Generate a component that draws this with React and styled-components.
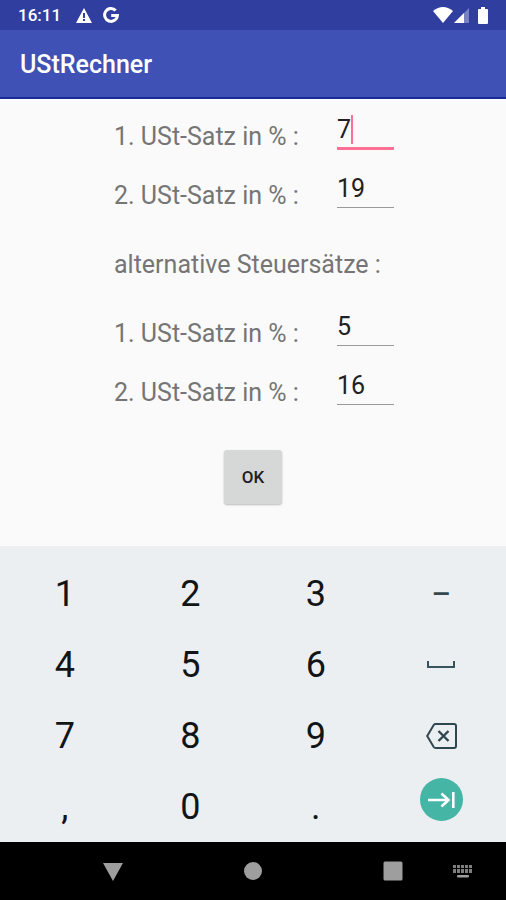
import { useState } from 'react';
import styled, { createGlobalStyle } from 'styled-components';

const GlobalStyle = createGlobalStyle`
  * {
    box-sizing: border-box;
  }

  body {
    margin: 0;
    background: #fafafa;
    font-family: Roboto, 'Liberation Sans', sans-serif;
  }

  button {
    border: none;
    padding: 0;
    background: none;
    font: inherit;
    color: inherit;
    cursor: pointer;
  }
`;

const Screen = styled.div`
  display: flex;
  flex-direction: column;
  min-height: 100vh;
`;

const StatusBar = styled.div`
  display: flex;
  align-items: center;
  justify-content: space-between;
  height: 30px;
  padding: 0 18px;
  background: #303f9f;
  color: #fff;
`;

const StatusGroup = styled.div`
  display: flex;
  align-items: center;
  gap: ${(props) => props.$gap};

  & svg {
    display: block;
  }
`;

const Clock = styled.span`
  font-size: 17px;
  font-weight: 500;
  line-height: 30px;
  margin-right: 4px;
`;

const AppBar = styled.header`
  display: flex;
  align-items: center;
  height: 69px;
  padding: 2px 20px 0;
  background: #3f51b5;
  border-bottom: 2px solid #1a2a98;
  color: #fff;
`;

const Title = styled.h1`
  margin: 0;
  font-size: 25px;
  font-weight: 500;
  line-height: 32px;
`;

const Form = styled.form`
  flex: 1;
  display: flex;
  flex-direction: column;
  align-items: center;
  padding: 8px 16px 42px;
  background: #fafafa;
  color: #757575;
  font-size: 25px;
`;

const Fields = styled.div`
  width: 100%;
  max-width: 282px;
  padding-left: 2px;
`;

const FieldRow = styled.div`
  display: grid;
  grid-template-columns: 1fr 57px;
  height: 59px;

  & label {
    line-height: 59px;
  }
`;

const Heading = styled.p`
  margin: 0;
  line-height: 79px;
`;

const InputBox = styled.div`
  position: relative;
  padding-top: 7px;
`;

const Input = styled.input`
  display: block;
  width: 100%;
  height: ${(props) => (props.$active ? '36px' : '35px')};
  padding: 0 0 ${(props) => (props.$active ? '3px' : '4px')};
  border: none;
  border-bottom: ${(props) => (props.$active ? '3px solid #ff6f96' : '1px solid #9a9a9a')};
  border-radius: 0;
  outline: none;
  background: transparent;
  color: #212121;
  caret-color: transparent;
  font: inherit;
  line-height: 30px;
`;

const Caret = styled.span`
  position: absolute;
  top: 8px;
  left: 14px;
  width: 2px;
  height: 29px;
  background: #ff6f96;
`;

const OkButton = styled.button`
  && {
    width: 58px;
    height: 54px;
    margin-top: 28px;
    border-radius: 3px;
    background: #d6d7d7;
    box-shadow: 0 1px 2px rgba(0, 0, 0, 0.25);
    color: #212121;
    font-size: 17px;
    font-weight: 500;
  }
`;

const Keyboard = styled.div`
  display: grid;
  grid-template-columns: repeat(4, 1fr);
  grid-auto-rows: 71px;
  padding: 12px 2px 0;
  background: #eceff1;
`;

const Key = styled.button`
  && {
    display: flex;
    align-items: center;
    justify-content: center;
    font-size: ${(props) => (props.$small ? '30px' : '36px')};
    font-weight: ${(props) => (props.$small ? '500' : '400')};
    color: ${(props) => (props.$small ? '#37474f' : '#111517')};
    padding-bottom: ${(props) => (props.$raised ? '14px' : '0')};
  }
`;

const NextCircle = styled.span`
  display: flex;
  align-items: center;
  justify-content: center;
  width: 43px;
  height: 43px;
  border-radius: 50%;
  background: #45b5a6;
`;

const NavBar = styled.nav`
  display: grid;
  grid-template-columns: repeat(7, 1fr);
  height: 58px;
  padding: 0 8px;
  background: #000;
  color: #9e9e9e;
`;

const NavButton = styled.button`
  && {
    display: flex;
    align-items: center;
    justify-content: center;
    grid-column: ${(props) => props.$column};
  }
`;

const WarningIcon = () => (
  <svg width="16" height="15" viewBox="0 0 16 15" fill="currentColor" fillRule="evenodd">
    <path d="M8 0L16 15H0ZM7 5V10H9V5ZM7 11V13H9V11Z" />
  </svg>
);

const GoogleIcon = () => (
  <svg width="16" height="16" viewBox="0 0 16 16" fill="none" stroke="currentColor" strokeWidth="3">
    <path d="M12.7 3.6A6.4 6.4 0 1 0 14.4 8.5H8.2" />
  </svg>
);

const WifiIcon = () => (
  <svg width="20" height="16" viewBox="0 0 20 16" fill="currentColor">
    <path d="M0 4Q10-4 20 4L10 16Z" />
  </svg>
);

const SignalIcon = () => (
  <svg width="15" height="15" viewBox="0 0 15 15" fill="currentColor">
    <path d="M0 15L15 0V15Z" opacity="0.35" />
    <path d="M0 15L10 5V15Z" />
  </svg>
);

const BatteryIcon = () => (
  <svg width="10" height="17" viewBox="0 0 10 17" fill="currentColor">
    <path d="M3 0H7V2H9Q10 2 10 3V16Q10 17 9 17H1Q0 17 0 16V3Q0 2 1 2H3Z" />
  </svg>
);

const SpaceIcon = () => (
  <svg width="28" height="8" viewBox="0 0 28 8" fill="none" stroke="#37535c" strokeWidth="2">
    <path d="M1 0V6H27V0" />
  </svg>
);

const BackspaceIcon = () => (
  <svg width="31" height="26" viewBox="0 0 31 26" fill="none" stroke="#2f4650" strokeWidth="2">
    <path d="M9.5 1H28Q30 1 30 3V23Q30 25 28 25H9.5Q8.5 25 7.7 24L1.2 13L7.7 2Q8.5 1 9.5 1Z" />
    <path d="M12.5 8L22.5 18M22.5 8L12.5 18" strokeWidth="2.4" />
  </svg>
);

const NextIcon = () => (
  <svg width="27" height="16" viewBox="0 0 27 16" fill="none" stroke="#fff" strokeWidth="2.6">
    <path d="M0 8H20M13.5 1.5L20.5 8L13.5 14.5M25.3 0V16" />
  </svg>
);

const BackIcon = () => (
  <svg width="22" height="19" viewBox="0 0 22 19" fill="currentColor">
    <path d="M1 1H21L11 19Z" />
  </svg>
);

const HomeIcon = () => (
  <svg width="18" height="18" viewBox="0 0 18 18" fill="currentColor">
    <circle cx="9" cy="9" r="9" />
  </svg>
);

const RecentsIcon = () => (
  <svg width="20" height="20" viewBox="0 0 20 20" fill="currentColor">
    <rect x="0.5" y="0.5" width="19" height="19" rx="1.5" />
  </svg>
);

const KeyboardIcon = () => (
  <svg width="20" height="13" viewBox="0 0 20 13" fill="currentColor">
    {[0, 4, 8, 12, 16].map((x) => (
      <path key={x} d={`M${x} 0h3v3h-3zM${x} 4h3v4h-3z`} opacity="0.8" />
    ))}
    <rect x="4" y="10" width="12" height="2.5" rx="1" />
  </svg>
);

const keys = [
  { label: '1' },
  { label: '2' },
  { label: '3' },
  { label: '–', small: true },
  { label: '4' },
  { label: '5' },
  { label: '6' },
  { name: 'Leerzeichen', icon: <SpaceIcon /> },
  { label: '7' },
  { label: '8' },
  { label: '9' },
  { name: 'Löschen', icon: <BackspaceIcon /> },
  { label: ',' },
  { label: '0' },
  { label: '.' },
  {
    name: 'Weiter',
    raised: true,
    icon: (
      <NextCircle>
        <NextIcon />
      </NextCircle>
    )
  }
];

const RateField = ({ id, label, value, active, onChange }) => (
  <FieldRow>
    <label htmlFor={id}>{label}</label>
    <InputBox>
      <Input
        id={id}
        type="text"
        inputMode="decimal"
        value={value}
        $active={active}
        onChange={(event) => onChange(id, event.target.value)}
      />
      {active && <Caret />}
    </InputBox>
  </FieldRow>
);

const App = () => {
  const [rates, setRates] = useState({
    rate1: '7',
    rate2: '19',
    alt1: '5',
    alt2: '16'
  });

  const changeRate = (id, value) => {
    setRates((prevState) => {
      return {
        ...prevState,
        [id]: value
      };
    });
  };

  const submit = (event) => {
    event.preventDefault();
  };

  return (
    <Screen>
      <GlobalStyle />
      <StatusBar>
        <StatusGroup $gap="11px">
          <Clock>16:11</Clock>
          <WarningIcon />
          <GoogleIcon />
        </StatusGroup>
        <StatusGroup $gap="9px">
          <StatusGroup $gap="1px">
            <WifiIcon />
            <SignalIcon />
          </StatusGroup>
          <BatteryIcon />
        </StatusGroup>
      </StatusBar>
      <AppBar>
        <Title>UStRechner</Title>
      </AppBar>
      <Form onSubmit={submit}>
        <Fields>
          <RateField id="rate1" label="1. USt-Satz in % :" value={rates.rate1} active onChange={changeRate} />
          <RateField id="rate2" label="2. USt-Satz in % :" value={rates.rate2} onChange={changeRate} />
          <Heading>alternative Steuersätze :</Heading>
          <RateField id="alt1" label="1. USt-Satz in % :" value={rates.alt1} onChange={changeRate} />
          <RateField id="alt2" label="2. USt-Satz in % :" value={rates.alt2} onChange={changeRate} />
        </Fields>
        <OkButton type="submit">OK</OkButton>
      </Form>
      <Keyboard>
        {keys.map((key) => (
          <Key
            key={key.label || key.name}
            type="button"
            aria-label={key.name}
            $small={key.small}
            $raised={key.raised}
          >
            {key.icon || key.label}
          </Key>
        ))}
      </Keyboard>
      <NavBar>
        <NavButton type="button" aria-label="Zurück" $column={2}>
          <BackIcon />
        </NavButton>
        <NavButton type="button" aria-label="Startseite" $column={4}>
          <HomeIcon />
        </NavButton>
        <NavButton type="button" aria-label="Letzte Apps" $column={6}>
          <RecentsIcon />
        </NavButton>
        <NavButton type="button" aria-label="Tastatur wechseln" $column={7}>
          <KeyboardIcon />
        </NavButton>
      </NavBar>
    </Screen>
  );
};

export default App;
